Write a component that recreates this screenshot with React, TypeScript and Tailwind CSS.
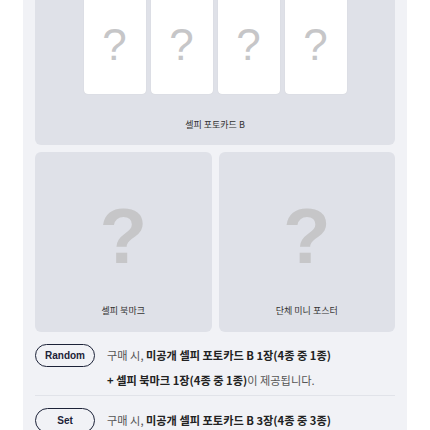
import React from 'react';

const font = { fontFamily: '"Noto Sans CJK KR", "Noto Sans", sans-serif' };

const Q = ({ className }: { className: string }) => (
  <span className={`font-['Liberation_Sans',sans-serif] text-[#c6c6c8] leading-none ${className}`}>?</span>
);

export default function App() {
  return (
    <div className="w-[430px] h-[430px] overflow-hidden bg-white font-['Noto_Sans_CJK_KR',sans-serif]" style={font}>
      <div className="mx-[23px] bg-[#f1f2f6] px-3 h-full">
        {/* top card */}
        <div className="bg-[#dfe1e8] rounded-b-[6px] flex flex-col items-center">
          <div className="flex gap-[5px]">
            {[0, 1, 2, 3].map((i) => (
              <div key={i} className="w-[62px] h-[94px] bg-white rounded-b-[4px] flex items-center justify-center shadow-[0_0_1px_rgba(0,0,0,0.15)]">
                <Q className="text-[44px] pb-[4px]" />
              </div>
            ))}
          </div>
          <div className="pt-[25px] pb-[14px] text-[9px] leading-[12px] text-[#333]">셀피 포토카드 B</div>
        </div>

        {/* two cards */}
        <div className="grid grid-cols-2 gap-[7px] mt-[7px]">
          {['셀피 북마크', '단체 미니 포스터'].map((t) => (
            <div key={t} className="h-[180px] bg-[#dfe1e8] rounded-[6px] flex flex-col items-center">
              <Q className="text-[78px] font-bold mt-[45px]" />
              <div className="mt-auto mb-[15px] text-[9px] leading-[12px] text-[#333]">{t}</div>
            </div>
          ))}
        </div>

        {/* info rows */}
        <div className="mt-[12px] flex gap-3">
          <div className="w-[60px] h-[23px] shrink-0 rounded-full border-[1.5px] border-[#1c2238] flex items-center justify-center text-[10px] font-bold text-[#1c2238] font-['Liberation_Sans',sans-serif]">
            Random
          </div>
          <div className="text-[11.2px] leading-[25px] text-[#555] -mt-[1px]">
            <div>
              구매 시, <b className="text-[#222]">미공개 셀피 포토카드 B 1장(4종 중 1종)</b>
            </div>
            <div>
              <b className="text-[#222]">+ 셀피 북마크 1장(4종 중 1종)</b>이 제공됩니다.
            </div>
          </div>
        </div>
        <div className="mt-[2px] h-px bg-[#e1e3e9]" />
        <div className="mt-[12px] flex gap-3">
          <div className="w-[60px] h-[25px] shrink-0 rounded-full border-[1.5px] border-[#1c2238] flex items-center justify-center text-[10px] font-bold text-[#1c2238] font-['Liberation_Sans',sans-serif]">
            Set
          </div>
          <div className="text-[11.2px] leading-[25px] text-[#555]">
            <div>
              구매 시, <b className="text-[#222]">미공개 셀피 포토카드 B 3장(4종 중 3종)</b>
            </div>
          </div>
        </div>
      </div>
    </div>
  );
}
